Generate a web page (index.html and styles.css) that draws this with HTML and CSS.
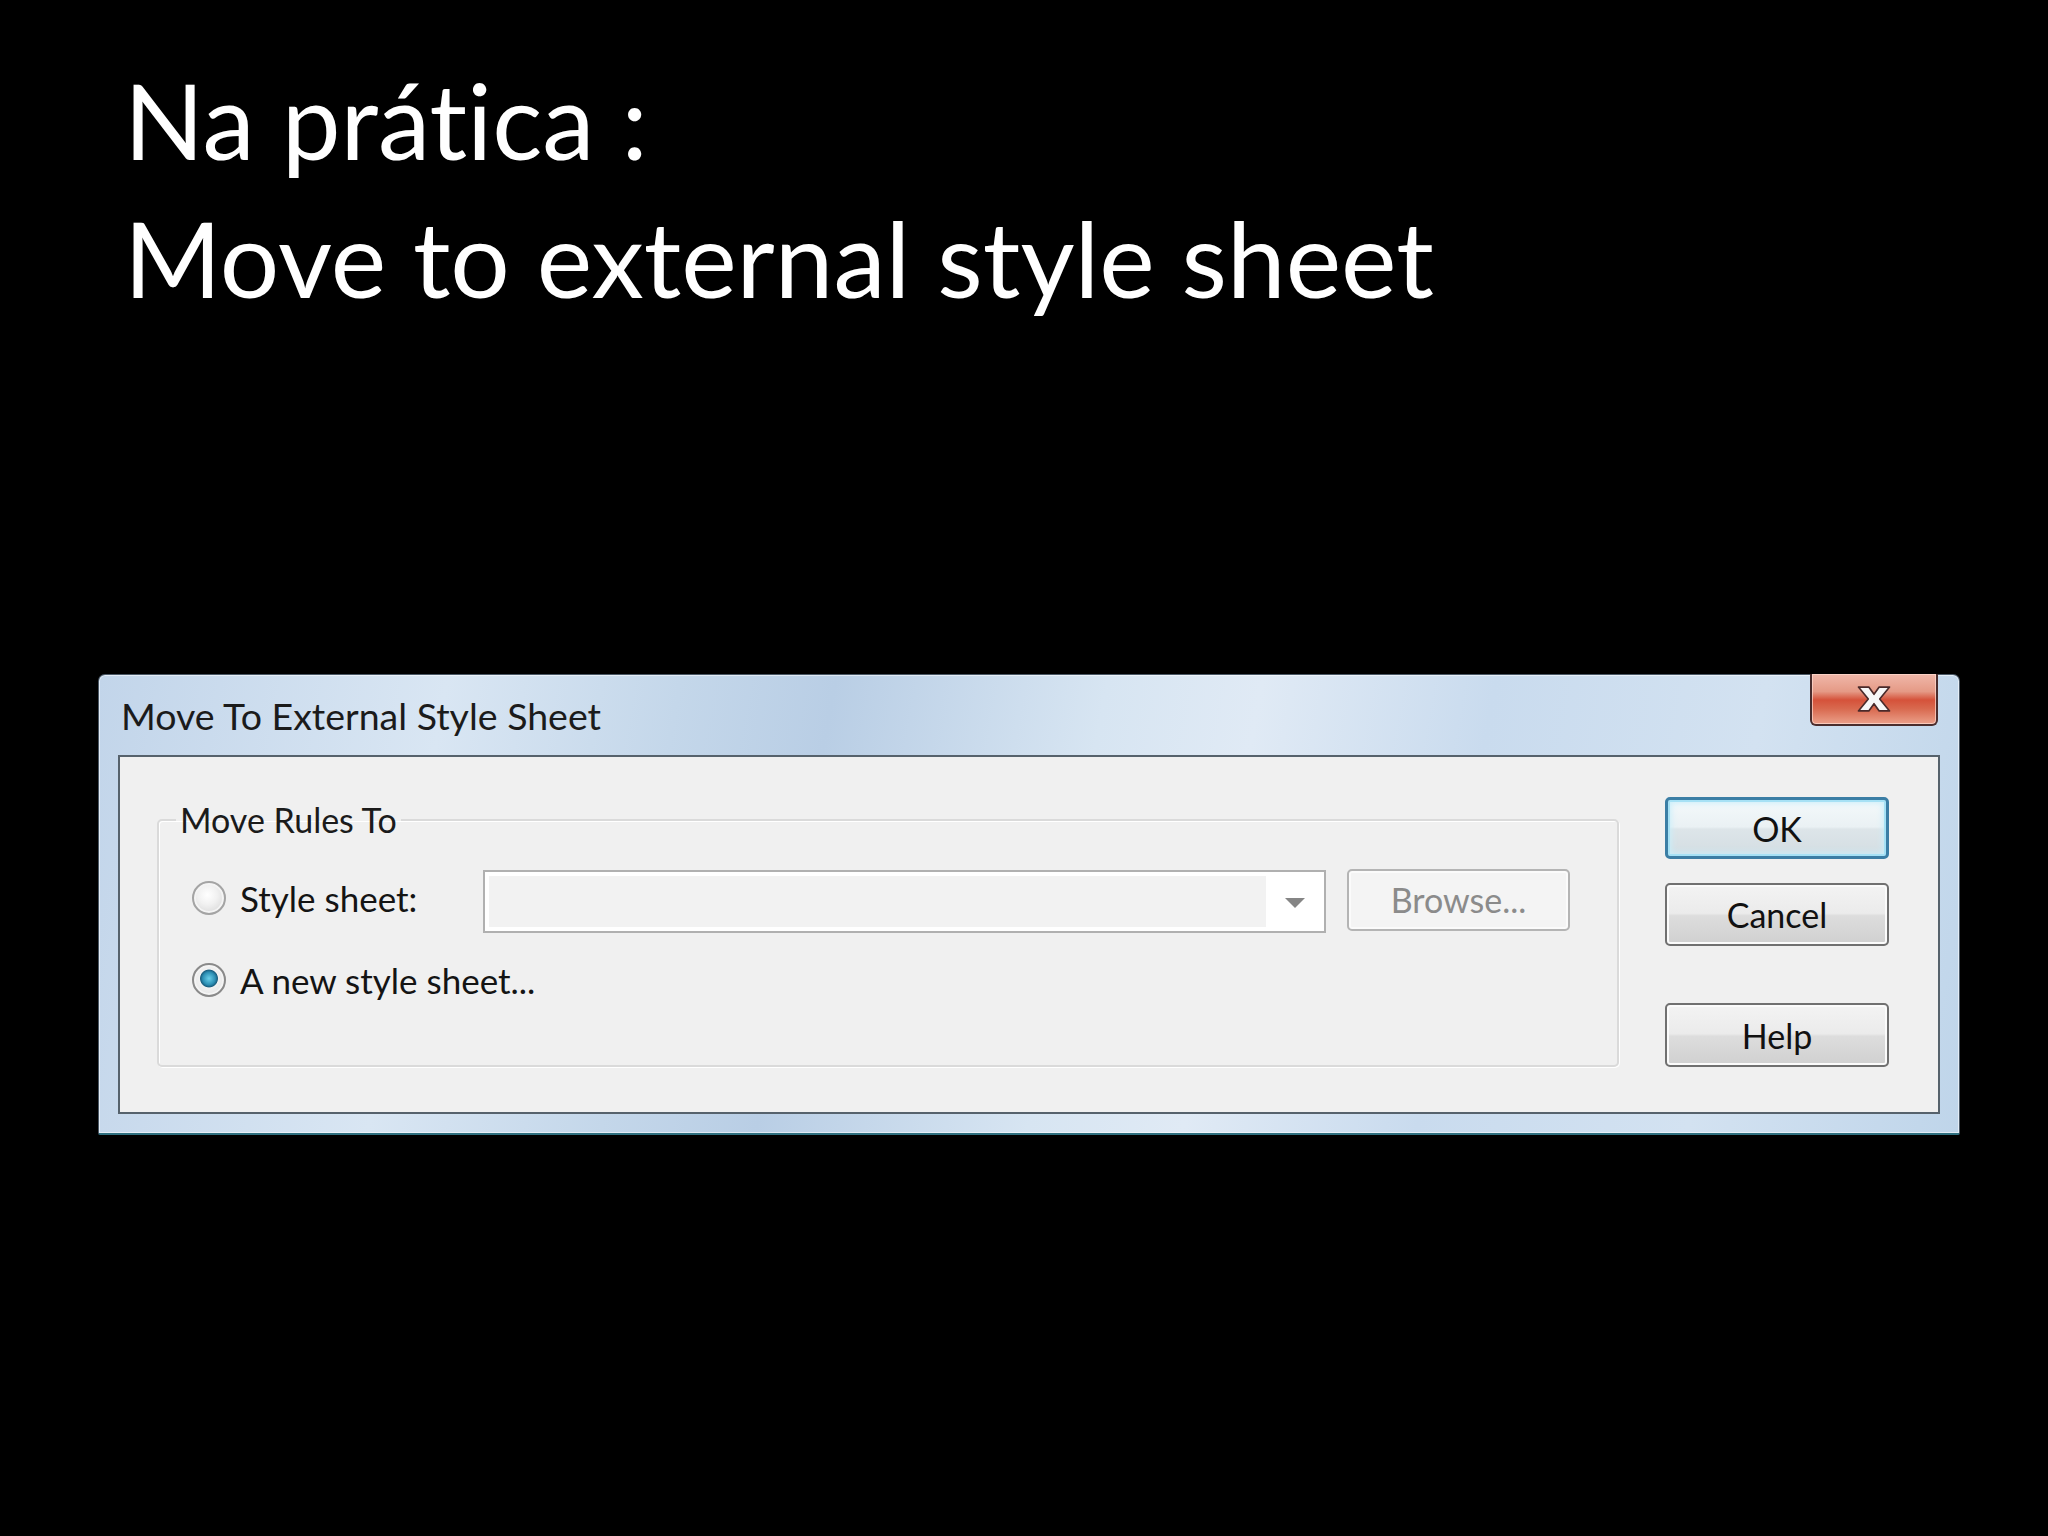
FILE: index.html
```html
<!DOCTYPE html>
<html>
<head>
<meta charset="utf-8">
<link rel="stylesheet" href="styles.css">
<title>Na prática</title>
</head>
<body>
  <h1 class="slide-title">Na prática :<br>Move to external style sheet</h1>

  <div class="dialog">
    <div class="titlebar">
      <span class="dialog-title">Move To External Style Sheet</span>
      <div class="close-btn">
        <svg width="36" height="28" viewBox="0 0 34 27">
          <polygon points="2,2 12,2 17,9 22,2 32,2 22.5,13.5 32,25 22,25 17,18 12,25 2,25 11.5,13.5" fill="#f7f7f7" stroke="#4a2a2a" stroke-width="1.6" stroke-linejoin="round"/>
        </svg>
      </div>
    </div>
    <div class="client">
      <fieldset class="groupbox">
        <legend>Move Rules To</legend>
        <div class="option-row first-row">
          <span class="radio"></span>
          <span class="option-label">Style sheet:</span>
          <div class="combo">
            <div class="combo-field"></div>
            <div class="combo-drop"><span class="combo-arrow"></span></div>
          </div>
          <div class="btn btn-disabled">Browse...</div>
        </div>
        <div class="option-row">
          <span class="radio radio-checked"></span>
          <span class="option-label">A new style sheet...</span>
        </div>
      </fieldset>
      <div class="button-col">
        <div class="btn btn-default">OK</div>
        <div class="btn btn-cancel">Cancel</div>
        <div class="btn btn-help">Help</div>
      </div>
    </div>
  </div>
</body>
</html>
```

FILE: styles.css
```css
body {
  margin: 0;
  background-color: black;
  color: white;
}

.slide-title {
  margin: 0;
  padding: 50px 0 0 124px;
  font-family: Lato, "Open Sans", sans-serif;
  font-weight: normal;
  font-size: 105px;
  line-height: 138px;
  font-variant-ligatures: none;
  color: #ffffff;
}

.dialog {
  margin: 348px 0 0 98px;
  width: 1862px;
  height: 461px;
  box-sizing: border-box;
  padding: 0 19px 19px 19px;
  border: 1px solid #4a5866;
  border-bottom: 2px solid #2f7080;
  border-radius: 7px 7px 2px 2px;
  background: linear-gradient(100deg, #c2d5ea 0%, #d9e6f3 18%, #c4d7ea 30%, #b9cee5 38%, #d7e5f2 52%, #e0eaf5 60%, #c9dbee 72%, #d3e2f1 86%, #bfd5ea 100%);
  box-shadow: inset 0 0 0 1px rgba(255, 255, 255, 0.55);
  font-family: Lato, "Liberation Sans", sans-serif;
  color: #111111;
}

.titlebar {
  height: 80px;
  display: flex;
  justify-content: space-between;
  align-items: flex-start;
}

.dialog-title {
  padding: 19px 0 0 3px;
  font-size: 37.5px;
  line-height: 44px;
  color: #1b1b1b;
}

.close-btn {
  margin: -1px 2px 0 0;
  width: 128px;
  height: 52px;
  box-sizing: border-box;
  border: 2px solid #4a2d2d;
  border-top: none;
  border-radius: 0 0 6px 6px;
  background: linear-gradient(#f0b8aa 0%, #e59a86 35%, #d5523a 52%, #d96a50 70%, #eba08a 100%);
  box-shadow: inset 0 0 0 1px rgba(255, 220, 210, 0.7);
  display: flex;
  align-items: center;
  justify-content: center;
}

.client {
  height: 359px;
  box-sizing: border-box;
  border: 2px solid #56626c;
  background-color: #f0f0f0;
  display: flex;
  align-items: flex-start;
  padding: 0 49px 0 37px;
}

.groupbox {
  margin: 43px 0 0 0;
  width: 1462px;
  height: 267px;
  box-sizing: border-box;
  padding: 0;
  border: 2px solid #dadada;
  border-radius: 5px;
  box-shadow: 1px 1px 0 #ffffff, inset 1px 1px 0 #ffffff;
}

.groupbox legend {
  margin-left: 17px;
  padding: 0 4px;
  font-size: 34px;
  line-height: 40px;
  color: #1b1b1b;
}

.option-row {
  display: flex;
  align-items: center;
  height: 40px;
  padding-left: 33px;
  margin-top: 26px;
}

.option-row.first-row {
  height: 65px;
  margin-top: 29px;
}

.first-row .radio,
.first-row .option-label {
  margin-bottom: 8px;
}

.radio {
  width: 34px;
  height: 34px;
  box-sizing: border-box;
  border-radius: 50%;
  border: 2px solid #a4a4a4;
  background: radial-gradient(circle at 45% 40%, #ffffff 0%, #f1f1f1 40%, #cfcfcf 100%);
  box-shadow: inset 0 0 0 2px #f4f4f4;
  flex: none;
}

.radio-checked {
  border-color: #8a8a8a;
  background: radial-gradient(circle at 50% 45%, #6ad0ea 0%, #2c8fb4 28%, #1a5f80 38%, #f2f2f2 42%, #dadada 100%);
}

.option-label {
  margin-left: 14px;
  width: 243px;
  flex: none;
  font-size: 35px;
  line-height: 40px;
  color: #141414;
  white-space: nowrap;
}

.combo {
  width: 843px;
  height: 63px;
  box-sizing: border-box;
  border: 2px solid #b0b0b0;
  background-color: #ffffff;
  display: flex;
  padding: 4px 0 4px 4px;
  flex: none;
}

.combo-field {
  width: 777px;
  background-color: #f2f2f2;
}

.combo-drop {
  flex: 1;
  display: flex;
  align-items: center;
  justify-content: center;
}

.combo-arrow {
  width: 0;
  height: 0;
  border-left: 10px solid transparent;
  border-right: 10px solid transparent;
  border-top: 10px solid #858585;
  margin-top: 2px;
}

.btn {
  width: 224px;
  height: 62px;
  box-sizing: border-box;
  border: 2px solid #707070;
  border-radius: 5px;
  background: linear-gradient(#f3f3f3 0%, #ebebeb 48%, #dddddd 52%, #d0d0d0 100%);
  box-shadow: inset 0 0 0 2px #fbfbfb;
  display: flex;
  align-items: center;
  justify-content: center;
  font-size: 34px;
  color: #111111;
  flex: none;
}

.btn-disabled {
  margin-left: 21px;
  width: 223px;
  margin-bottom: 4px;
  border-color: #b4b4b4;
  background: #f4f4f4;
  box-shadow: inset 0 0 0 2px #fbfbfb;
  color: #8b8b8b;
}

.button-col {
  margin: 40px 0 0 46px;
  display: flex;
  flex-direction: column;
}

.btn-default {
  border: 3px solid #3b7ea5;
  background: linear-gradient(#f4f9fb 0%, #eaf1f4 48%, #dde5e9 52%, #d3dde2 100%);
  box-shadow: inset 0 0 0 2px #a6e1f5, inset 0 0 6px 3px #c8eefa;
}

.btn-cancel {
  margin-top: 24px;
  height: 63px;
}

.btn-help {
  margin-top: 57px;
  height: 64px;
}
```
